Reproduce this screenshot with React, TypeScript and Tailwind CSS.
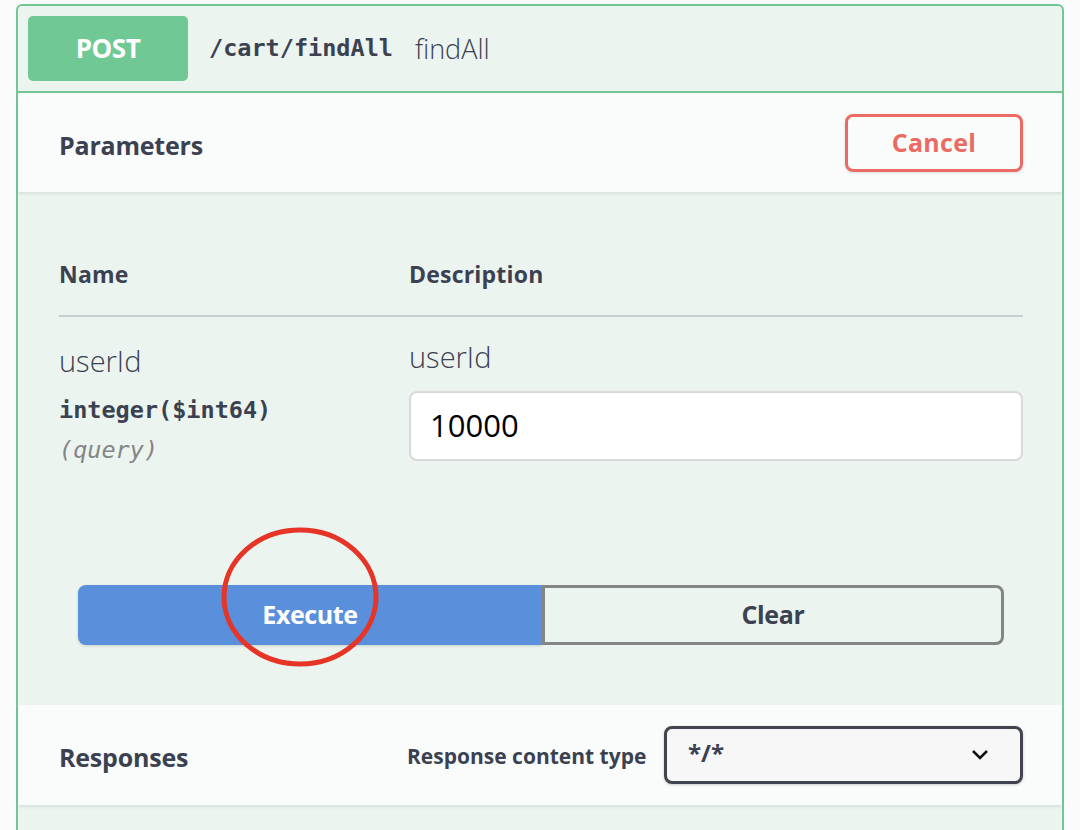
import React from 'react';

const head = { fontFamily: '"Open Sans", "Noto Sans", sans-serif' };
const mono = { fontFamily: '"DejaVu Sans Mono", "Liberation Mono", monospace' };

const App: React.FC = () => {
  return (
    <div className="min-h-[830px] bg-[#fafafa] pl-[16px] pr-[16px] pt-[4px] overflow-hidden h-[830px]" style={head}>
      <div className="relative border-2 border-[#73c795] rounded-t-[6px] bg-[#ebf4ef] h-[840px]">
        {/* summary */}
        <div className="flex items-center h-[87px] border-b-2 border-[#73c795] pl-[10px]">
          <div className="w-[160px] h-[65px] rounded-[5px] bg-[#70c995] flex items-center justify-center text-white font-bold text-[26px] tracking-[-0.5px]">
            POST
          </div>
          <span className="ml-[21px] text-[23.5px] font-bold text-[#3b4151]" style={mono}>
            /cart/findAll
          </span>
          <span className="ml-[22px] text-[27px] font-light text-[#3b4151] mt-[2px]">findAll</span>
        </div>

        {/* parameters header */}
        <div className="flex items-center justify-between h-[99px] bg-[#fafcfb] pl-[41px] pr-[39px] shadow-[0_2px_3px_rgba(0,0,0,0.08)]">
          <span className="text-[25px] font-bold text-[#3b4151] tracking-[-0.2px] mt-[6px]">Parameters</span>
          <button className="w-[178px] h-[58px] border-[3px] border-[#eb6b63] rounded-[8px] text-[#eb6b63] text-[25px] font-bold tracking-[0.3px] bg-transparent shadow-[0_1px_3px_rgba(0,0,0,0.12)]">
            Cancel
          </button>
        </div>

        {/* body */}
        <div className="pl-[41px] pr-[39px] pt-[65px] h-[513px]">
          <div className="flex text-[23px] font-bold text-[#3b4151] pb-[23px] border-b-2 border-[#c9cdd0] tracking-[0.2px]">
            <span className="w-[350px]">Name</span>
            <span>Description</span>
          </div>
          <div className="flex pt-[26px] h-[268px]">
            <div className="w-[350px] text-[#3b4151]">
              <div className="text-[29px] font-light leading-[36px]">userId</div>
              <div className="text-[23.5px] font-bold mt-[16px] leading-[30px]" style={mono}>integer($int64)</div>
              <div className="text-[23.5px] italic text-[#858585] mt-[10px] leading-[30px]" style={mono}>(query)</div>
            </div>
            <div className="flex-1">
              <div className="text-[29px] font-light leading-[36px] text-[#3b4151] -mt-[4px]">userId</div>
              <div className="mt-[16px] h-[70px] bg-white border-2 border-[#d9d9d9] rounded-[8px] flex items-center pl-[19px] text-[31px] text-black">
                10000
              </div>
            </div>
          </div>
          <div className="flex mx-[19px] h-[60px] relative">
            <button className="w-[464px] bg-[#5a8fdc] rounded-l-[8px] text-white text-[25px] font-bold tracking-[-0.4px] shadow-[0_1px_3px_rgba(0,0,0,0.15)]">
              Execute
            </button>
            <button className="flex-1 border-[3px] border-[#858585] rounded-r-[8px] text-[#3b4151] text-[25px] font-bold tracking-[-0.4px] bg-transparent">
              Clear
            </button>
            <svg className="absolute left-[141px] -top-[59px] pointer-events-none" width="162" height="144" viewBox="0 0 162 144">
              <ellipse cx="81" cy="71" rx="76" ry="67" fill="none" stroke="#e63427" strokeWidth="5" />
            </svg>
          </div>
        </div>

        {/* responses */}
        <div className="flex items-center h-[100px] bg-[#fafcfb] pl-[41px] pr-[39px] shadow-[0_2px_3px_rgba(0,0,0,0.08)]">
          <span className="w-[348px] text-[25px] font-bold text-[#3b4151] tracking-[-0.2px] mt-[6px]">Responses</span>
          <span className="text-[21px] font-bold text-[#3b4151] tracking-[0px] mt-[4px]">Response content type</span>
          <div className="ml-auto w-[359px] h-[58px] border-[3px] border-[#41444e] rounded-[8px] bg-[#f7f7f7] flex items-center justify-between pl-[21px] pr-[30px] shadow-[0_1px_3px_rgba(0,0,0,0.2)]">
            <span className="text-[24px] font-bold text-[#3b4151] -mt-[4px]">*/*</span>
            <svg width="20" height="14" viewBox="0 0 20 14">
              <polyline points="3,3 10,10 17,3" fill="none" stroke="#111" strokeWidth="2.5" />
            </svg>
          </div>
        </div>
      </div>
    </div>
  );
};

export default App;
